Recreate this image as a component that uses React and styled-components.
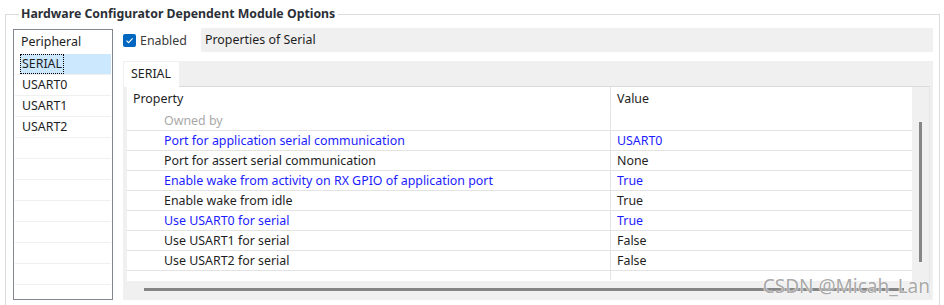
import styled, { createGlobalStyle } from 'styled-components';

const Global = createGlobalStyle`
  html, body {
    margin: 0;
    padding: 0;
    background: #ffffff;
  }
  body {
    font-family: "Noto Sans", "Open Sans", sans-serif;
    font-size: 12.4px;
    color: #1e1e1e;
  }
`;

const Page = styled.div`
  position: relative;
  width: 944px;
  height: 305px;
  overflow: hidden;
`;

const Group = styled.fieldset`
  margin: 6px 0 0 5px;
  width: 935px;
  height: 310px;
  box-sizing: border-box;
  border: 1px solid #dcdcdc;
  padding: 6px 6px 0 7px;
  display: grid;
  grid-template-columns: 100px 1fr;
  column-gap: 10px;
  align-items: start;
`;

const Legend = styled.legend`
  margin-left: 6px;
  padding: 0 3px 0 2px;
  font-weight: 700;
  font-size: 12.3px;
  line-height: 16px;
  color: #2b2f36;
`;

const ListBox = styled.div`
  margin-top: 1px;
  height: 271px;
  box-sizing: border-box;
  border: 1px solid #828790;
  padding: 0 1px;
  overflow: hidden;
  display: flex;
  flex-direction: column;
`;

const ListHeader = styled.div`
  height: 24px;
  line-height: 24px;
  padding-left: 6px;
`;

const ListRow = styled.div`
  flex: none;
  height: 20px;
  line-height: 20px;
  border-bottom: 1px solid #f0f0f0;
  padding-left: 5px;
  span {
    display: inline-block;
    line-height: 18px;
    padding: 0 1px;
    border: 1px dotted ${({ $selected }) => ($selected ? '#000' : 'transparent')};
  }
  background: ${({ $selected }) =>
    $selected ? 'linear-gradient(to right, #fff 5px, #cce8ff 5px)' : '#fff'};
`;

const Right = styled.div`
  display: flex;
  flex-direction: column;
`;

const TopBar = styled.div`
  height: 24px;
  display: flex;
  align-items: center;
`;

const CheckLabel = styled.label`
  width: 78px;
  display: flex;
  align-items: center;
  gap: 4px;
  color: #3a3a3a;
`;

const Check = styled.span`
  width: 13px;
  height: 13px;
  border-radius: 2px;
  background: #0067c0;
  display: flex;
  align-items: center;
  justify-content: center;
`;

const Caption = styled.div`
  flex: 1;
  height: 24px;
  line-height: 24px;
  background: #f0f0f0;
  padding-left: 4px;
`;

const TabPanel = styled.div`
  margin-top: 9px;
  height: 238px;
  background: #f0f0f0;
  padding: 1px 3px 0 4px;
  display: flex;
  flex-direction: column;
`;

const TabStrip = styled.div`
  display: flex;
  height: 24px;
`;

const Tab = styled.div`
  position: relative;
  z-index: 1;
  margin-left: -3px;
  width: 55px;
  height: 25px;
  background: #ffffff;
  line-height: 24px;
  padding-left: 7px;
  box-sizing: border-box;
`;

const Grid = styled.div`
  height: 211px;
  background: #ffffff;
  border-top: 1px solid #dadada;
  border-right: 1px solid #e6e6e6;
  display: grid;
  grid-template-columns: 1fr 17px;
  grid-template-rows: 1fr 17px;
  overflow: hidden;
`;

const Body = styled.div`
  display: grid;
  grid-template-columns: 484px 1fr;
  align-content: start;
  overflow: hidden;
`;

const Cell = styled.div`
  height: ${({ $h }) => $h || 20}px;
  box-sizing: border-box;
  line-height: ${({ $h }) => ($h || 20) - 1}px;
  padding-left: ${({ $indent }) => $indent}px;
  border-bottom: 1px solid ${({ $line }) => ($line ? '#e3e3e3' : 'transparent')};
  border-right: ${({ $first }) => ($first ? '1px solid #e3e3e3' : 'none')};
  color: ${({ $tone }) =>
    $tone === 'blue' ? '#1c1cff' : $tone === 'gray' ? '#a9a9a9' : '#1e1e1e'};
  white-space: nowrap;
`;

const VScroll = styled.div`
  background: #f0f0f0;
  display: flex;
  justify-content: center;
  padding-top: 35px;
`;

const VThumb = styled.div`
  width: 3px;
  height: 140px;
  background: #858585;
`;

const HScroll = styled.div`
  background: #f0f0f0;
  display: flex;
  align-items: center;
  padding-left: 17px;
`;

const HThumb = styled.div`
  width: 760px;
  height: 3px;
  background: #858585;
`;

const Corner = styled.div`
  background: #f0f0f0;
`;

const Watermark = styled.div`
  position: absolute;
  right: 14px;
  bottom: 6px;
  font-family: "Noto Sans", sans-serif;
  font-size: 19px;
  color: rgba(130, 130, 130, 0.7);
  text-shadow: 0 0 2px #fff, 0 0 1px #fff;
`;

const peripherals = ['SERIAL', 'USART0', 'USART1', 'USART2', '', '', '', '', '', '', '', ''];

const props = [
  ['Port for application serial communication', 'USART0', 'blue'],
  ['Port for assert serial communication', 'None', 'dark'],
  ['Enable wake from activity on RX GPIO of application port', 'True', 'blue'],
  ['Enable wake from idle', 'True', 'dark'],
  ['Use USART0 for serial', 'True', 'blue'],
  ['Use USART1 for serial', 'False', 'dark'],
  ['Use USART2 for serial', 'False', 'dark'],
];

export default function App() {
  return (
    <Page>
      <Global />
      <Group>
        <Legend>Hardware Configurator Dependent Module Options</Legend>
        <ListBox>
          <ListHeader>Peripheral</ListHeader>
          {peripherals.map((p, i) => (
            <ListRow key={i} $selected={i === 0}>
              {p && <span>{p}</span>}
            </ListRow>
          ))}
        </ListBox>
        <Right>
          <TopBar>
            <CheckLabel>
              <Check>
                <svg width="9" height="9" viewBox="0 0 9 9">
                  <path d="M1.5 4.6 L3.6 6.6 L7.6 2.3" fill="none" stroke="#fff" strokeWidth="1.1" />
                </svg>
              </Check>
              Enabled
            </CheckLabel>
            <Caption>Properties of Serial</Caption>
          </TopBar>
          <TabPanel>
            <TabStrip>
              <Tab>SERIAL</Tab>
            </TabStrip>
            <Grid>
              <Body>
                <Cell $h={24} $indent={6} $first>Property</Cell>
                <Cell $h={24} $indent={6}>Value</Cell>
                <Cell $indent={37} $first $line $tone="gray">Owned by</Cell>
                <Cell $line />
                {props.map(([name, value, tone]) => [
                  <Cell key={name} $indent={37} $first $line $tone={tone}>{name}</Cell>,
                  <Cell key={name + 'v'} $indent={6} $line $tone={tone}>{value}</Cell>,
                ])}
                <Cell $first $h={9} />
                <Cell $h={9} />
              </Body>
              <VScroll>
                <VThumb />
              </VScroll>
              <HScroll>
                <HThumb />
              </HScroll>
              <Corner />
            </Grid>
          </TabPanel>
        </Right>
      </Group>
      <Watermark>CSDN @Micah_Lan</Watermark>
    </Page>
  );
}
